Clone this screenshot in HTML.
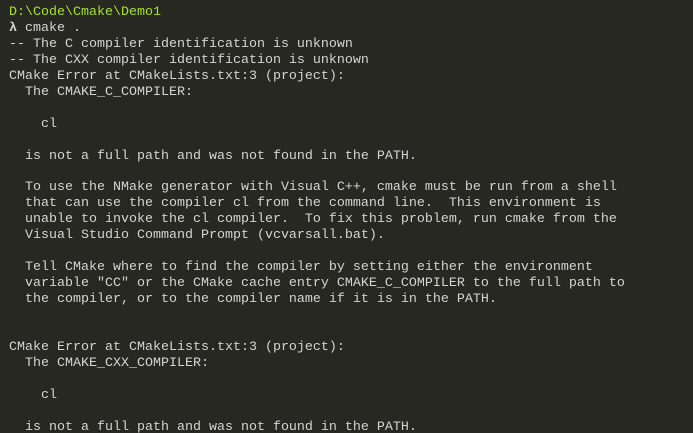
<!DOCTYPE html>
<html><head><style>
html,body{margin:0;padding:0;background:#272822;width:693px;height:433px;overflow:hidden}
pre{margin:0;padding:5px 0 0 9px;font-family:"Liberation Mono",monospace;font-size:13.33px;line-height:15.96px;color:#d4d4d4}
.g{color:#a6e22e}
b{font-weight:bold}
</style></head><body><pre><span class="g">D:\Code\Cmake\Demo1</span>
<b>λ</b> cmake .
-- The C compiler identification is unknown
-- The CXX compiler identification is unknown
CMake Error at CMakeLists.txt:3 (project):
  The CMAKE_C_COMPILER:

    cl

  is not a full path and was not found in the PATH.

  To use the NMake generator with Visual C++, cmake must be run from a shell
  that can use the compiler cl from the command line.  This environment is
  unable to invoke the cl compiler.  To fix this problem, run cmake from the
  Visual Studio Command Prompt (vcvarsall.bat).

  Tell CMake where to find the compiler by setting either the environment
  variable "CC" or the CMake cache entry CMAKE_C_COMPILER to the full path to
  the compiler, or to the compiler name if it is in the PATH.


CMake Error at CMakeLists.txt:3 (project):
  The CMAKE_CXX_COMPILER:

    cl

  is not a full path and was not found in the PATH.
</pre></body></html>
